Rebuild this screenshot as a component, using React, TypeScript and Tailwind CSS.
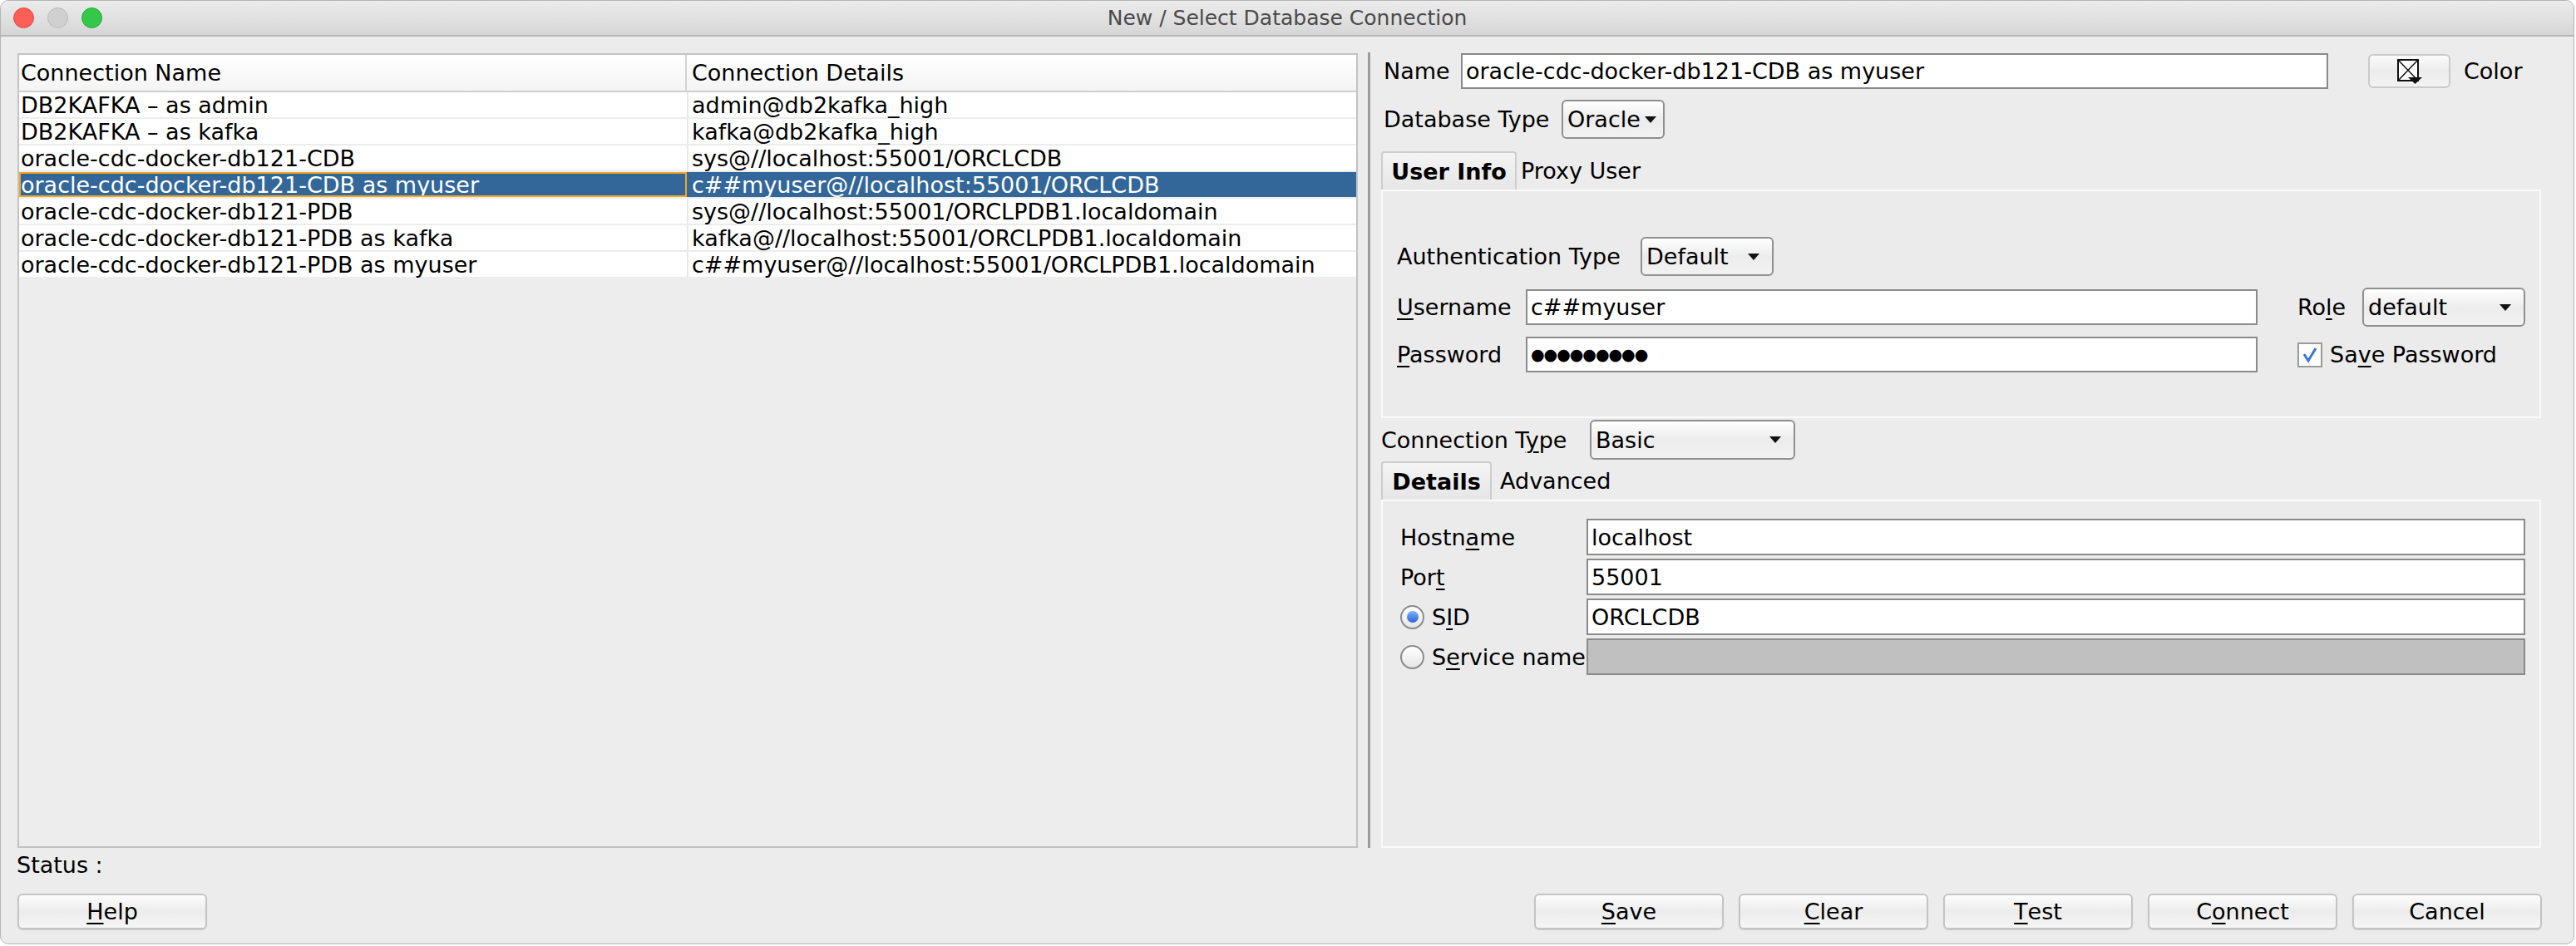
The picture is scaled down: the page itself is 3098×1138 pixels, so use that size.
import React from "react";

const ROWS = [
  ["DB2KAFKA – as admin", "admin@db2kafka_high"],
  ["DB2KAFKA – as kafka", "kafka@db2kafka_high"],
  ["oracle-cdc-docker-db121-CDB", "sys@//localhost:55001/ORCLCDB"],
  ["oracle-cdc-docker-db121-CDB as myuser", "c##myuser@//localhost:55001/ORCLCDB"],
  ["oracle-cdc-docker-db121-PDB", "sys@//localhost:55001/ORCLPDB1.localdomain"],
  ["oracle-cdc-docker-db121-PDB as kafka", "kafka@//localhost:55001/ORCLPDB1.localdomain"],
  ["oracle-cdc-docker-db121-PDB as myuser", "c##myuser@//localhost:55001/ORCLPDB1.localdomain"],
];
const SELECTED = 3;

// label with one underlined mnemonic letter
function Mn({ text, at }: { text: string; at: number }) {
  if (at < 0) return <>{text}</>;
  return (
    <>
      {text.slice(0, at)}
      <span className="underline underline-offset-[4px] decoration-2">{text[at]}</span>
      {text.slice(at + 1)}
    </>
  );
}

function Arrow() {
  return (
    <svg width="16" height="10" viewBox="0 0 16 10" className="shrink-0">
      <path d="M1 1 H15 L8 9 Z" fill="#111" />
    </svg>
  );
}

function Combo({ w, h, text, tight }: { w: string; h: string; text: string; tight?: boolean }) {
  return (
    <div
      className={`${w} ${h} flex items-center border-2 border-[#8f8f8f] rounded-[6px] bg-gradient-to-b from-white via-[#ececec] to-[#f2f2f2] pl-[5px] ${tight ? "gap-[4px]" : "justify-between pr-[14px]"}`}
    >
      <span>{text}</span>
      <Arrow />
    </div>
  );
}

function Field({ w, h = "h-[44px]", value, disabled, dots }: { w: string; h?: string; value?: string; disabled?: boolean; dots?: boolean }) {
  return (
    <div
      className={`${w} ${h} flex items-center border-2 border-[#8a8a8a] pl-[4px] ${disabled ? "bg-[#c0c0c0]" : "bg-white"} ${dots ? "text-[19px] tracking-[-1px]" : ""}`}
    >
      {value}
    </div>
  );
}

function Btn({ text, at }: { text: string; at: number }) {
  return (
    <button className="w-[228px] h-[43px] flex items-center justify-center border-2 border-[#c4c4c4] rounded-[6px] bg-gradient-to-b from-[#fdfdfd] via-[#ececec] to-[#f6f6f6] shadow-[0_1px_1px_rgba(0,0,0,0.15)]">
      <Mn text={text} at={at} />
    </button>
  );
}

function Radio({ on }: { on?: boolean }) {
  return (
    <div className="w-[29px] h-[29px] rounded-full border-2 border-[#8c8c8c] bg-gradient-to-b from-white to-[#e6e6e6] flex items-center justify-center shrink-0">
      {on && <div className="w-[14px] h-[14px] rounded-full bg-gradient-to-b from-[#7fb0ff] to-[#2a62d4]" />}
    </div>
  );
}

export default function App() {
  return (
    <div className="w-[3098px] h-[1138px] bg-white font-['DejaVu_Sans',sans-serif] text-[27px] leading-none text-black">
      <div className="w-[3096px] h-[1136px] bg-[#ececec] rounded-[10px] border border-[#b4b4b4] overflow-hidden flex flex-col">
        {/* title bar */}
        <div className="h-[43px] shrink-0 flex items-center border-b-2 border-[#b6b6b6] bg-gradient-to-b from-[#ececec] to-[#d6d6d6] relative">
          <div className="flex gap-[16px] pl-[15px]">
            <div className="w-[25px] h-[25px] rounded-full bg-[#fc5f57] border border-[#de4a42]" />
            <div className="w-[25px] h-[25px] rounded-full bg-[#d0d0d0] border border-[#b9b9b9]" />
            <div className="w-[25px] h-[25px] rounded-full bg-[#34c84a] border border-[#25a535]" />
          </div>
          <div className="flex-1 text-center text-[25px] text-[#4a4a4a] pr-[122px]">New / Select Database Connection</div>
        </div>

        {/* main */}
        <div className="h-[976px] shrink-0 flex">
          {/* connection table */}
          <div className="pl-[20px] pt-[20px]">
            <div className="w-[1612px] h-[956px] border-2 border-[#c3c3c3] bg-[#ededed] flex flex-col">
              <div className="h-[45px] flex border-b-2 border-[#cfcfcf] bg-gradient-to-b from-white to-[#f4f4f4]">
                <div className="w-[803px] border-r-2 border-[#d2d2d2] flex items-center pl-[2px]">Connection Name</div>
                <div className="flex-1 flex items-center pl-[6px]">Connection Details</div>
              </div>
              {ROWS.map(([n, d], i) => {
                const sel = i === SELECTED;
                return (
                  <div
                    key={n}
                    className={`h-[32px] flex border-b-2 ${sel ? "bg-[#33679a] text-white border-[#ececec]" : "bg-white border-[#ececec]"}`}
                  >
                    <div
                      className={`w-[803px] flex items-center pl-[2px] ${sel ? "outline-2 -outline-offset-2 outline-[#f5a623]" : ""}`}
                    >
                      {n}
                    </div>
                    <div className={`flex-1 flex items-center pl-[4px] border-l-2 ${sel ? "border-[#33679a]" : "border-[#e8e8e8]"}`}>
                      {d}
                    </div>
                  </div>
                );
              })}
            </div>
          </div>

          {/* splitter */}
          <div className="ml-[12px] mt-[19px] w-[3px] h-[957px] bg-[#9c9c9c]" />

          {/* connection properties */}
          <div className="pl-[16px] pt-[20px] flex flex-col">
            <div className="flex items-center h-[43px]">
              <span className="w-[93px]">Name</span>
              <Field w="w-[1043px]" h="h-[43px]" value="oracle-cdc-docker-db121-CDB as myuser" />
              <div className="ml-[48px] w-[99px] h-[41px] border-2 border-[#cacaca] rounded-[6px] bg-gradient-to-b from-[#fbfbfb] via-[#ebebeb] to-[#f3f3f3] flex items-center justify-center">
                <svg width="32" height="32" viewBox="0 0 32 32">
                  <rect x="2" y="2" width="24" height="25" fill="white" stroke="#111" strokeWidth="2" />
                  <path d="M3 3 L25 26 M25 3 L3 26" stroke="#111" strokeWidth="1.5" />
                  <path d="M14 23 H31 L22.5 31 Z" fill="#111" />
                </svg>
              </div>
              <span className="ml-[16px]">Color</span>
            </div>

            <div className="flex items-center mt-[13px] h-[47px]">
              <span className="w-[214px]">Database Type</span>
              <Combo w="w-[124px]" h="h-[47px]" text="Oracle" tight />
            </div>

            {/* user info tabs */}
            <div className="flex items-end mt-[15px] -ml-[3px]">
              <div className="w-[163px] h-[46px] border-2 border-b-0 border-[#cdcdcd] rounded-t-[4px] bg-gradient-to-b from-[#f4f4f4] to-[#e6e6e6] flex items-center justify-center font-bold">
                User Info
              </div>
              <div className="h-[46px] flex items-center pl-[5px]">Proxy User</div>
            </div>
            <div className="-ml-[3px] w-[1395px] h-[275px] border-2 border-[#fafafa] bg-[#ebebeb] pl-[17px] pt-[55px] flex flex-col">
              <div className="flex items-center h-[47px]">
                <span className="w-[293px]">Authentication Type</span>
                <Combo w="w-[160px]" h="h-[47px]" text="Default" />
              </div>
              <div className="flex items-center h-[47px] mt-[14px]">
                <span className="w-[155px]"><Mn text="Username" at={0} /></span>
                <Field w="w-[880px]" h="h-[43px]" value="c##myuser" />
                <span className="ml-[48px] w-[78px]"><Mn text="Role" at={2} /></span>
                <Combo w="w-[196px]" h="h-[47px]" text="default" />
              </div>
              <div className="flex items-center h-[43px] mt-[12px]">
                <span className="w-[155px]"><Mn text="Password" at={0} /></span>
                <Field w="w-[880px]" h="h-[43px]" value="●●●●●●●●●" dots />
                <div className="ml-[48px] w-[30px] h-[30px] border-2 border-[#9a9a9a] bg-white flex items-center justify-center">
                  <svg width="20" height="20" viewBox="0 0 20 20">
                    <path d="M3 9 L8 17 L17 2" fill="none" stroke="#3b73d6" strokeWidth="3" />
                  </svg>
                </div>
                <span className="ml-[9px]"><Mn text="Save Password" at={2} /></span>
              </div>
            </div>

            <div className="flex items-center mt-[2px] h-[48px] -ml-[3px]">
              <span className="w-[251px]"><Mn text="Connection Type" at={12} /></span>
              <Combo w="w-[247px]" h="h-[48px]" text="Basic" />
            </div>

            {/* details tabs */}
            <div className="flex items-end mt-[2px] -ml-[3px]">
              <div className="w-[133px] h-[46px] border-2 border-b-0 border-[#cdcdcd] rounded-t-[4px] bg-gradient-to-b from-[#f4f4f4] to-[#e6e6e6] flex items-center justify-center font-bold">
                Details
              </div>
              <div className="h-[46px] flex items-center pl-[10px]">Advanced</div>
            </div>
            <div className="-ml-[3px] w-[1395px] h-[419px] border-2 border-[#fafafa] bg-[#ebebeb] pl-[21px] pt-[21px] flex flex-col gap-[4px]">
              <div className="flex items-center h-[44px]">
                <span className="w-[224px]"><Mn text="Hostname" at={5} /></span>
                <Field w="w-[1129px]" value="localhost" />
              </div>
              <div className="flex items-center h-[44px]">
                <span className="w-[224px]"><Mn text="Port" at={3} /></span>
                <Field w="w-[1129px]" value="55001" />
              </div>
              <div className="flex items-center h-[44px]">
                <div className="w-[224px] flex items-center gap-[9px]">
                  <Radio on />
                  <span><Mn text="SID" at={1} /></span>
                </div>
                <Field w="w-[1129px]" value="ORCLCDB" />
              </div>
              <div className="flex items-center h-[44px]">
                <div className="w-[224px] flex items-center gap-[9px]">
                  <Radio />
                  <span className="whitespace-nowrap"><Mn text="Service name" at={1} /></span>
                </div>
                <Field w="w-[1129px]" disabled />
              </div>
            </div>
          </div>
        </div>

        {/* status + buttons */}
        <div className="h-[40px] shrink-0 flex items-center pl-[19px]">Status :</div>
        <div className="mt-[15px] flex items-center justify-between pl-[20px] pr-[38px]">
          <Btn text="Help" at={0} />
          <div className="flex gap-[18px]">
            <Btn text="Save" at={0} />
            <Btn text="Clear" at={0} />
            <Btn text="Test" at={0} />
            <Btn text="Connect" at={1} />
            <Btn text="Cancel" at={-1} />
          </div>
        </div>
      </div>
    </div>
  );
}
